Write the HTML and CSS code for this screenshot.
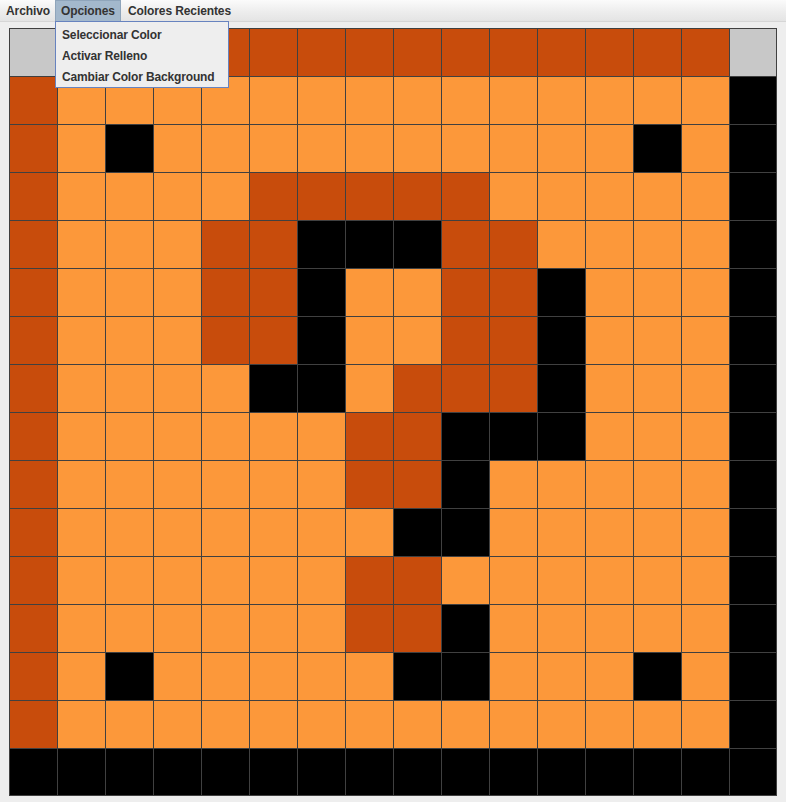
FILE: index.html
```html
<!DOCTYPE html>
<html>
<head>
<meta charset="utf-8">
<link rel="stylesheet" href="styles.css">
</head>
<body>
<div class="menubar">
  <div class="menu m-archivo">Archivo</div>
  <div class="menu m-opciones active">Opciones</div>
  <div class="menu m-colores">Colores Recientes</div>
</div>
<div class="popup">
  <div class="item">Seleccionar Color</div>
  <div class="item">Activar Relleno</div>
  <div class="item">Cambiar Color Background</div>
</div>
<div class="canvas">
  <div class="grid">
    <div class="c g"></div><div class="c d"></div><div class="c d"></div><div class="c d"></div><div class="c d"></div><div class="c d"></div><div class="c d"></div><div class="c d"></div><div class="c d"></div><div class="c d"></div><div class="c d"></div><div class="c d"></div><div class="c d"></div><div class="c d"></div><div class="c d"></div><div class="c g"></div>
    <div class="c d"></div><div class="c l"></div><div class="c l"></div><div class="c l"></div><div class="c l"></div><div class="c l"></div><div class="c l"></div><div class="c l"></div><div class="c l"></div><div class="c l"></div><div class="c l"></div><div class="c l"></div><div class="c l"></div><div class="c l"></div><div class="c l"></div><div class="c b"></div>
    <div class="c d"></div><div class="c l"></div><div class="c b"></div><div class="c l"></div><div class="c l"></div><div class="c l"></div><div class="c l"></div><div class="c l"></div><div class="c l"></div><div class="c l"></div><div class="c l"></div><div class="c l"></div><div class="c l"></div><div class="c b"></div><div class="c l"></div><div class="c b"></div>
    <div class="c d"></div><div class="c l"></div><div class="c l"></div><div class="c l"></div><div class="c l"></div><div class="c d"></div><div class="c d"></div><div class="c d"></div><div class="c d"></div><div class="c d"></div><div class="c l"></div><div class="c l"></div><div class="c l"></div><div class="c l"></div><div class="c l"></div><div class="c b"></div>
    <div class="c d"></div><div class="c l"></div><div class="c l"></div><div class="c l"></div><div class="c d"></div><div class="c d"></div><div class="c b"></div><div class="c b"></div><div class="c b"></div><div class="c d"></div><div class="c d"></div><div class="c l"></div><div class="c l"></div><div class="c l"></div><div class="c l"></div><div class="c b"></div>
    <div class="c d"></div><div class="c l"></div><div class="c l"></div><div class="c l"></div><div class="c d"></div><div class="c d"></div><div class="c b"></div><div class="c l"></div><div class="c l"></div><div class="c d"></div><div class="c d"></div><div class="c b"></div><div class="c l"></div><div class="c l"></div><div class="c l"></div><div class="c b"></div>
    <div class="c d"></div><div class="c l"></div><div class="c l"></div><div class="c l"></div><div class="c d"></div><div class="c d"></div><div class="c b"></div><div class="c l"></div><div class="c l"></div><div class="c d"></div><div class="c d"></div><div class="c b"></div><div class="c l"></div><div class="c l"></div><div class="c l"></div><div class="c b"></div>
    <div class="c d"></div><div class="c l"></div><div class="c l"></div><div class="c l"></div><div class="c l"></div><div class="c b"></div><div class="c b"></div><div class="c l"></div><div class="c d"></div><div class="c d"></div><div class="c d"></div><div class="c b"></div><div class="c l"></div><div class="c l"></div><div class="c l"></div><div class="c b"></div>
    <div class="c d"></div><div class="c l"></div><div class="c l"></div><div class="c l"></div><div class="c l"></div><div class="c l"></div><div class="c l"></div><div class="c d"></div><div class="c d"></div><div class="c b"></div><div class="c b"></div><div class="c b"></div><div class="c l"></div><div class="c l"></div><div class="c l"></div><div class="c b"></div>
    <div class="c d"></div><div class="c l"></div><div class="c l"></div><div class="c l"></div><div class="c l"></div><div class="c l"></div><div class="c l"></div><div class="c d"></div><div class="c d"></div><div class="c b"></div><div class="c l"></div><div class="c l"></div><div class="c l"></div><div class="c l"></div><div class="c l"></div><div class="c b"></div>
    <div class="c d"></div><div class="c l"></div><div class="c l"></div><div class="c l"></div><div class="c l"></div><div class="c l"></div><div class="c l"></div><div class="c l"></div><div class="c b"></div><div class="c b"></div><div class="c l"></div><div class="c l"></div><div class="c l"></div><div class="c l"></div><div class="c l"></div><div class="c b"></div>
    <div class="c d"></div><div class="c l"></div><div class="c l"></div><div class="c l"></div><div class="c l"></div><div class="c l"></div><div class="c l"></div><div class="c d"></div><div class="c d"></div><div class="c l"></div><div class="c l"></div><div class="c l"></div><div class="c l"></div><div class="c l"></div><div class="c l"></div><div class="c b"></div>
    <div class="c d"></div><div class="c l"></div><div class="c l"></div><div class="c l"></div><div class="c l"></div><div class="c l"></div><div class="c l"></div><div class="c d"></div><div class="c d"></div><div class="c b"></div><div class="c l"></div><div class="c l"></div><div class="c l"></div><div class="c l"></div><div class="c l"></div><div class="c b"></div>
    <div class="c d"></div><div class="c l"></div><div class="c b"></div><div class="c l"></div><div class="c l"></div><div class="c l"></div><div class="c l"></div><div class="c l"></div><div class="c b"></div><div class="c b"></div><div class="c l"></div><div class="c l"></div><div class="c l"></div><div class="c b"></div><div class="c l"></div><div class="c b"></div>
    <div class="c d"></div><div class="c l"></div><div class="c l"></div><div class="c l"></div><div class="c l"></div><div class="c l"></div><div class="c l"></div><div class="c l"></div><div class="c l"></div><div class="c l"></div><div class="c l"></div><div class="c l"></div><div class="c l"></div><div class="c l"></div><div class="c l"></div><div class="c b"></div>
    <div class="c b"></div><div class="c b"></div><div class="c b"></div><div class="c b"></div><div class="c b"></div><div class="c b"></div><div class="c b"></div><div class="c b"></div><div class="c b"></div><div class="c b"></div><div class="c b"></div><div class="c b"></div><div class="c b"></div><div class="c b"></div><div class="c b"></div><div class="c b"></div>
  </div>
</div>
</body>
</html>
```

FILE: styles.css
```css
html, body {
  margin: 0;
  padding: 0;
  background: #eeeeee;
  font-family: "Liberation Sans", Arial, sans-serif;
  font-weight: bold;
  font-size: 12px;
  color: #333333;
  overflow: hidden;
}

.menubar {
  height: 21px;
  display: flex;
  background: linear-gradient(#fbfbfb, #ececec 60%, #e4e4e4);
  border-bottom: 1px solid #d6d6d6;
  box-sizing: content-box;
}

.menu {
  box-sizing: border-box;
  height: 21px;
  line-height: 21px;
  padding-top: 1px;
  padding-left: 6px;
  white-space: nowrap;
  letter-spacing: -0.1px;
}

.m-archivo { width: 55px; }
.m-opciones { width: 66px; }
.m-colores { padding-left: 7px; }

.menu.active {
  background: #a3b8cc;
  border: 1px solid #8fa5bb;
  border-bottom: none;
  line-height: 20px;
  padding-top: 0;
  padding-left: 5px;
}

.popup {
  position: absolute;
  left: 55px;
  top: 21px;
  width: 174px;
  height: 67px;
  box-sizing: border-box;
  background: #eeeeee;
  border: 1px solid #6783bf;
  padding-top: 3px;
  z-index: 10;
}

.popup .item {
  height: 21px;
  line-height: 21px;
  padding-left: 6px;
  white-space: nowrap;
  letter-spacing: -0.15px;
}

.canvas {
  padding: 6px 9px 0 9px;
}

.grid {
  display: grid;
  grid-template-columns: repeat(16, 48px);
  grid-template-rows: repeat(16, 48px);
  width: 768px;
}

.c {
  box-sizing: border-box;
  border-left: 1px solid #404040;
  border-top: 1px solid #404040;
}

.c:nth-child(16n) { border-right: 1px solid #404040; }
.c:nth-child(n+241) { border-bottom: 1px solid #404040; }

.g { background: #c8c8c8; }
.d { background: #c84c0c; }
.l { background: #fc983a; }
.b { background: #000000; }
```
